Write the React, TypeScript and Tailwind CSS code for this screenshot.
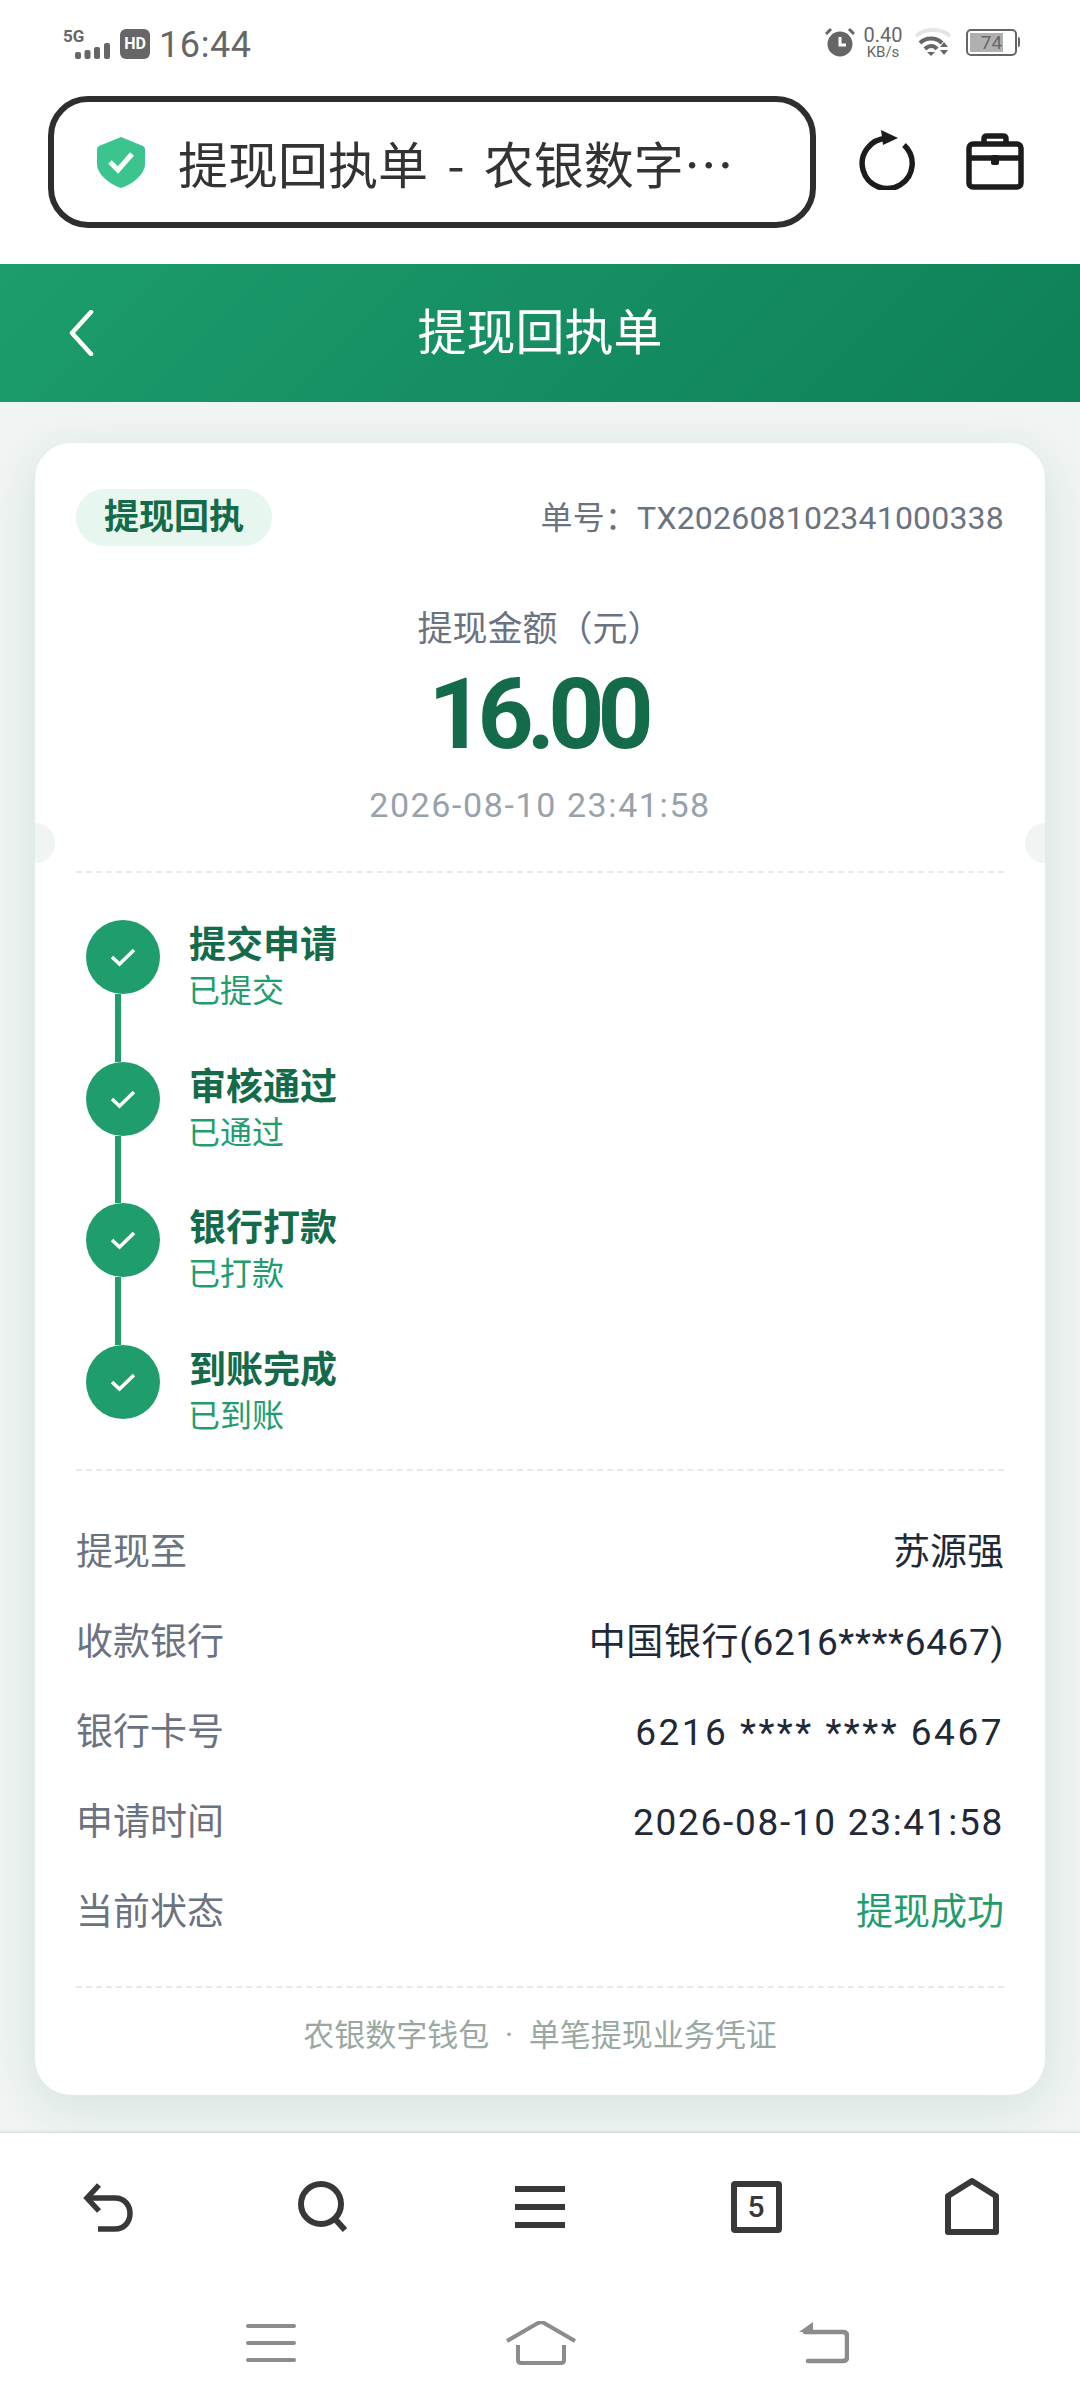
import React from 'react';

const steps = [
  { title: '提交申请', sub: '已提交' },
  { title: '审核通过', sub: '已通过' },
  { title: '银行打款', sub: '已打款' },
  { title: '到账完成', sub: '已到账' },
];

const rows = [
  { label: '提现至', value: '苏源强', cls: 'text-[#1f2937]' },
  { label: '收款银行', value: '中国银行(6216****6467)', cls: 'text-[#1f2937] tracking-[0.65px]' },
  { label: '银行卡号', value: '6216 **** **** 6467', cls: 'text-[#1f2937] tracking-[2.5px]' },
  { label: '申请时间', value: '2026-08-10 23:41:58', cls: 'text-[#1f2937] tracking-[1.7px]' },
  { label: '当前状态', value: '提现成功', cls: 'text-[#1f9d6c]' },
];

const StatusBar = () => (
  <div className="flex h-[96px] shrink-0 items-start justify-between pl-[63px] pr-[60px] pt-[27px] text-[#666666]">
    <div className="flex items-center">
      <div className="relative h-[30px] w-[48px]">
        <span className="absolute left-0 top-[-1px] text-[17px] font-bold leading-[16px]">5G</span>
        <svg className="absolute left-[12px] top-[14px]" width="35" height="16" viewBox="0 0 35 16" fill="#666666">
          <rect x="0" y="9" width="6" height="7" rx="2" />
          <rect x="9.5" y="7" width="6" height="9" rx="2" />
          <rect x="19" y="4" width="6" height="12" rx="2" />
          <rect x="29" y="0" width="6" height="16" rx="2" />
        </svg>
      </div>
      <div className="ml-[9px] flex h-[30px] w-[30px] items-center justify-center rounded-[6px] bg-[#666666] text-[16px] font-bold leading-none text-white">HD</div>
      <span className="ml-[9px] mt-[3px] text-[36px] leading-[30px] tracking-[0.6px]">16:44</span>
    </div>
    <div className="flex items-center">
      <svg width="30" height="30" viewBox="0 0 30 30" fill="#666666">
        <circle cx="15" cy="17" r="12.5" />
        <path d="M15 10v8h6" fill="none" stroke="#ffffff" strokeWidth="3" />
        <path d="M1 7l5-5M29 7l-5-5" stroke="#666666" strokeWidth="3" />
      </svg>
      <div className="my-[-2px] ml-[8px] flex w-[40px] flex-col items-center">
        <span className="text-[20px] leading-[20px]">0.40</span>
        <span className="text-[15px] leading-[14px]">KB/s</span>
      </div>
      <svg className="ml-[12px]" width="37" height="28" viewBox="0 0 37 28" fill="none">
        <path d="M1 8C10 0 26 0 35 8" stroke="#e4e4e4" strokeWidth="4" />
        <path d="M5 15C11 9 21 9 27 15" stroke="#666666" strokeWidth="4" />
        <path d="M10 21C14 17 19 17 22 21" stroke="#666666" strokeWidth="4" />
        <path d="M12 24h8l-4 4z" fill="#666666" />
        <path d="M29 14l4 5h-8zM25 22h8l-4 5z" fill="#666666" />
      </svg>
      <div className="ml-[14px] flex items-center">
        <div className="relative h-[27px] w-[51px] rounded-[5px] border-2 border-[#666666] p-[2px]">
          <div className="h-full w-[33px] bg-[#b0b0b0]" />
          <span className="absolute inset-0 flex items-center justify-center text-[19px] leading-none">74</span>
        </div>
        <div className="ml-px h-[10px] w-[2px] rounded-r bg-[#666666]" />
      </div>
    </div>
  </div>
);

const AddressBar = () => (
  <div className="flex h-[168px] shrink-0 items-start pl-[48px]">
    <div className="flex h-[132px] w-[768px] items-center rounded-[40px] border-[6px] border-[#2e2e2e] pl-[43px]">
      <svg width="48" height="51" viewBox="0 0 48 51">
        <path d="M24 0L46 9Q48 10 48 12V27C48 37 36 47 24 51C12 47 0 37 0 27V12Q0 10 2 9Z" fill="#3cc48f" />
        <path d="M13 25L21 33L35 17" fill="none" stroke="#ffffff" strokeWidth="5" />
      </svg>
      <div className="ml-[33px] whitespace-nowrap text-[50px] leading-[60px] text-[#333333] [font-family:'Noto_Sans_CJK_SC',sans-serif] [word-spacing:8px]">提现回执单 - 农银数字…</div>
    </div>
    <svg className="ml-[43px] mt-[34px]" width="60" height="60" viewBox="0 0 60 60" fill="none">
      <path d="M28 8.5A25 25 0 1 0 45 15" stroke="#1c1c1c" strokeWidth="5.5" />
      <path d="M22 0L39 8L24 15Z" fill="#1c1c1c" />
    </svg>
    <svg className="ml-[47px] mt-[37px]" width="58" height="57" viewBox="0 0 58 57" fill="none" stroke="#1c1c1c" strokeWidth="5.5">
      <rect x="3" y="11" width="52" height="43" rx="4" />
      <path d="M3 25H55" />
      <path d="M18 11V6Q18 3 21 3H37Q40 3 40 6V11" />
      <rect x="25" y="22" width="8" height="10" rx="2" fill="#1c1c1c" stroke="none" />
    </svg>
  </div>
);

const Header = () => (
  <div className="relative flex h-[138px] shrink-0 items-center justify-center bg-[linear-gradient(135deg,#1c9d6c,#0f8057)] text-[49px] leading-none text-white">
    <svg className="absolute left-[68px] top-[46px]" width="26" height="46" viewBox="0 0 26 46" fill="none">
      <path d="M23 2L4 23L23 44" stroke="#ffffff" strokeWidth="4.5" strokeLinecap="round" strokeLinejoin="round" />
    </svg>
    提现回执单
  </div>
);

const Check = () => (
  <svg width="26" height="20" viewBox="0 0 26 20" fill="none">
    <path d="M2 10L9.5 17L24 3" stroke="#ffffff" strokeWidth="3.5" />
  </svg>
);

const Receipt = () => (
  <div className="relative mx-[35px] mt-[41px] h-[1652px] rounded-[36px] bg-white px-[41px] pt-[46px] shadow-[0_12px_48px_rgba(19,107,73,0.12)]">
    <div className="absolute left-0 top-[380px] h-[40px] w-[20px] rounded-r-full bg-[#f0f4f2]" />
    <div className="absolute right-0 top-[380px] h-[40px] w-[20px] rounded-l-full bg-[#f0f4f2]" />

    <div className="flex h-[57px] items-center justify-between">
      <span className="flex h-[57px] items-center rounded-full bg-[#e7f6ef] px-[28px] text-[35px] font-bold leading-none text-[#136b49]">提现回执</span>
      <span className="text-[32px] leading-none tracking-[0.2px] text-[#6b7280]">单号：TX202608102341000338</span>
    </div>

    <div className="mt-[62px] text-center text-[35px] leading-[44px] text-[#6b7280]">提现金额（元）</div>
    <div className="mt-[13px] pr-[5px] text-center text-[98px] font-bold leading-[100px] tracking-[-7px] text-[#136b49]">16.00</div>
    <div className="mt-[20px] text-center text-[34px] leading-[40px] tracking-[1.6px] text-[#98a2ab]">2026-08-10 23:41:58</div>

    <div className="mt-[46px] border-t-2 border-dashed border-[#e5ebe8]" />

    <div className="pl-[10px] pt-[47px]">
      {steps.map((s, i) => (
        <div key={s.title} className={`flex gap-[29px] ${i < 3 ? 'h-[141.5px]' : ''}`}>
          <div className="flex w-[74px] flex-col">
            <div className="flex h-[74px] w-[74px] shrink-0 items-center justify-center rounded-full bg-[#1f9d6c]">
              <Check />
            </div>
            {i < 3 && <div className="ml-[29px] w-[6px] flex-1 bg-[#1f9d6c]" />}
          </div>
          <div className="pt-[3px]">
            <div className="text-[37px] font-bold leading-[46px] text-[#136b49]">{s.title}</div>
            <div className="ml-[-1px] text-[32px] leading-[44px] text-[#1f9d6c]">{s.sub}</div>
          </div>
        </div>
      ))}
    </div>

    <div className="mt-[31px] border-t-2 border-dashed border-[#e5ebe8]" />

    <div className="pt-[37px]">
      {rows.map((r) => (
        <div key={r.label} className="flex h-[90px] items-center justify-between text-[37px] leading-none">
          <span className="text-[#6b7280]">{r.label}</span>
          <span className={r.cls}>{r.value}</span>
        </div>
      ))}
    </div>

    <div className="mt-[28px] border-t-2 border-dashed border-[#e5ebe8]" />

    <div className="mt-[28px] text-center text-[31px] leading-[40px] text-[#9aa8a2] [word-spacing:8px]">农银数字钱包 · 单笔提现业务凭证</div>
  </div>
);

const BottomBars = () => (
  <div className="flex h-[275px] shrink-0 flex-col bg-white shadow-[0_-1px_3px_rgba(0,0,0,0.12)]">
    <div className="grid h-[147px] grid-cols-5 items-center justify-items-center">
      <svg width="52" height="50" viewBox="0 0 52 50" fill="none" stroke="#383838" strokeWidth="5.5">
        <path d="M17 3L5 16L17 29" />
        <path d="M5 16H33C53 16 53 47 33 47H16" />
      </svg>
      <svg width="52" height="51" viewBox="0 0 52 51" fill="none" stroke="#383838" strokeWidth="6">
        <circle cx="23" cy="23" r="20" />
        <path d="M37 38L47 49" />
      </svg>
      <div className="flex h-[42px] w-[50px] flex-col justify-between">
        <div className="h-[6px] bg-[#383838]" />
        <div className="h-[6px] bg-[#383838]" />
        <div className="h-[6px] bg-[#383838]" />
      </div>
      <div className="flex h-[52px] w-[51px] items-center justify-center rounded-[4px] border-[6px] border-[#383838] text-[30px] font-medium leading-none text-[#383838]">5</div>
      <svg width="54" height="57" viewBox="0 0 54 57" fill="none" stroke="#383838" strokeWidth="6" strokeLinejoin="round">
        <path d="M3 54V18L27 3L51 18V54Z" />
      </svg>
    </div>
    <div className="flex flex-1 items-center pl-[246px] pb-[3px]">
      <div className="flex h-[38px] w-[50px] flex-col justify-between">
        <div className="h-[4px] rounded-full bg-[#8c8c8c]" />
        <div className="h-[4px] rounded-full bg-[#8c8c8c]" />
        <div className="h-[4px] rounded-full bg-[#8c8c8c]" />
      </div>
      <svg className="ml-[210px]" width="70" height="44" viewBox="0 0 70 44" fill="none" stroke="#8c8c8c" strokeWidth="4">
        <path d="M1 20L32 2Q35 0.5 38 2L69 20" />
        <path d="M12 24V39Q12 42 15 42H55Q58 42 58 39V24" />
      </svg>
      <svg className="ml-[223px]" width="50" height="42" viewBox="0 0 50 42" fill="none">
        <path d="M14 0V10H0Z" fill="#8c8c8c" />
        <path d="M6 10H44Q48 10 48 14V35Q48 39 44 39H9" stroke="#8c8c8c" strokeWidth="4.5" strokeLinecap="round" />
      </svg>
    </div>
  </div>
);

const App: React.FC = () => {
  return (
    <div className="flex h-[2408px] w-[1080px] flex-col overflow-hidden bg-[#f0f4f2] [font-family:Roboto,'Noto_Sans_CJK_SC',sans-serif]">
      <div className="bg-white">
        <StatusBar />
        <AddressBar />
      </div>
      <Header />
      <div className="h-[1731px] shrink-0 overflow-hidden">
        <Receipt />
      </div>
      <BottomBars />
    </div>
  );
};

export default App;
